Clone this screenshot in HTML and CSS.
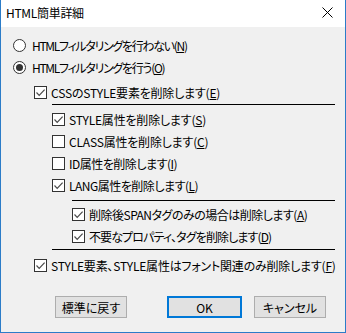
FILE: index.html
```html
<!DOCTYPE html>
<html lang="ja">
<head>
  <meta charset="UTF-8">
  <title>HTML簡単詳細</title>
  <link rel="stylesheet" href="styles.css">
</head>
<body>
  <div class="window">
    <div class="titlebar">
      <span class="title">HTML簡単詳細</span>
      <svg class="close" width="11" height="11" viewBox="0 0 11 11"><path d="M0.5 0.5 L10.5 10.5 M10.5 0.5 L0.5 10.5" stroke="#000" stroke-width="1" fill="none"/></svg>
    </div>

    <div class="content">
      <div class="opt lv0 kana"><span class="radio"></span>HTMLフィルタリングを行わない(<u>N</u>)</div>
      <div class="opt lv0 kana"><span class="radio on"></span>HTMLフィルタリングを行う(<u>O</u>)</div>

      <div class="opt lv1 first"><span class="cb on"><svg width="11" height="11" viewBox="0 0 11 11"><path d="M1.5 5.5 L4.2 8.3 L9.6 2.6" stroke="#4a4a4a" stroke-width="1.2" fill="none"/></svg></span>CSSのSTYLE要素を削除します(<u>E</u>)</div>
      <div class="sep sep-top lv2"></div>
      <div class="opt lv2"><span class="cb on"><svg width="11" height="11" viewBox="0 0 11 11"><path d="M1.5 5.5 L4.2 8.3 L9.6 2.6" stroke="#4a4a4a" stroke-width="1.2" fill="none"/></svg></span>STYLE属性を削除します(<u>S</u>)</div>
      <div class="opt lv2"><span class="cb"></span>CLASS属性を削除します(<u>C</u>)</div>
      <div class="opt lv2 semi"><span class="cb"></span>ID属性を削除します(<u>I</u>)</div>
      <div class="opt lv2 semi"><span class="cb on"><svg width="11" height="11" viewBox="0 0 11 11"><path d="M1.5 5.5 L4.2 8.3 L9.6 2.6" stroke="#4a4a4a" stroke-width="1.2" fill="none"/></svg></span>LANG属性を削除します(<u>L</u>)</div>
      <div class="sep sep-mid lv3"></div>
      <div class="opt lv3 semi"><span class="cb on"><svg width="11" height="11" viewBox="0 0 11 11"><path d="M1.5 5.5 L4.2 8.3 L9.6 2.6" stroke="#4a4a4a" stroke-width="1.2" fill="none"/></svg></span>削除後SPANタグのみの場合は削除します(<u>A</u>)</div>
      <div class="opt lv3 narrow"><span class="cb on"><svg width="11" height="11" viewBox="0 0 11 11"><path d="M1.5 5.5 L4.2 8.3 L9.6 2.6" stroke="#4a4a4a" stroke-width="1.2" fill="none"/></svg></span>不要なプロパティ、タグを削除します(<u>D</u>)</div>
      <div class="sep sep-end lv2"></div>
      <div class="opt lv1"><span class="cb on"><svg width="11" height="11" viewBox="0 0 11 11"><path d="M1.5 5.5 L4.2 8.3 L9.6 2.6" stroke="#4a4a4a" stroke-width="1.2" fill="none"/></svg></span>STYLE要素、STYLE属性はフォント関連のみ削除します(<u>F</u>)</div>

      <div class="buttons">
        <button class="btn">標準に戻す</button>
        <button class="btn default">OK</button>
        <button class="btn cancel">キャンセル</button>
      </div>
    </div>
  </div>
</body>
</html>
```

FILE: styles.css
```css
* { box-sizing: border-box; margin: 0; padding: 0; }
body {
  font-family: "Noto Sans CJK JP", "Noto Sans", sans-serif;
  font-size: 12px;
  color: #000;
  background: #f0f0f0;
}
.window {
  width: 346px;
  height: 333px;
  border: 1px solid #2b7cc8;
  border-top: none;
  background: #f0f0f0;
}
.titlebar {
  height: 27px;
  background: #fff;
  display: flex;
  align-items: center;
  justify-content: space-between;
  padding: 0 12px 2px 5px;
}
.title {
  font-size: 12px;
  letter-spacing: -0.3px;
}
.content {
  padding-top: 7px;
}
.opt {
  display: flex;
  align-items: center;
  height: 22px;
  white-space: nowrap;
  font-feature-settings: "palt";
  letter-spacing: -0.2px;
}
.opt.semi { letter-spacing: -0.5px; }
.opt.narrow { letter-spacing: -0.9px; }
.opt.kana { letter-spacing: -1.3px; }
.opt u { text-underline-offset: 1px; }
.opt.first { margin-top: 3px; }
.lv0 { padding-left: 12px; }
.lv1 { padding-left: 33px; }
.lv2 { padding-left: 51px; }
.lv3 { padding-left: 71px; }
.radio {
  width: 13px;
  height: 13px;
  border: 1px solid #333;
  border-radius: 50%;
  background: #fff;
  margin-right: 6px;
  display: flex;
  align-items: center;
  justify-content: center;
}
.radio.on::after {
  content: "";
  width: 7px;
  height: 7px;
  border-radius: 50%;
  background: #333;
}
.cb {
  width: 13px;
  height: 13px;
  border: 1px solid #333;
  background: #fff;
  margin-right: 4px;
  display: flex;
  align-items: center;
  justify-content: center;
}
.cb svg { display: block; }
.sep {
  height: 1px;
  background: #000;
  padding: 0;
  margin-right: 10px;
}
.sep.lv2 { margin-left: 51px; }
.sep.lv3 { margin-left: 71px; }
.sep-top { margin-top: 1px; margin-bottom: 3px; }
.sep-mid { margin-top: 4px; margin-bottom: 2px; }
.sep-end { margin-top: 2px; margin-bottom: 4px; }
.buttons {
  display: flex;
  padding: 20px 0 0 54px;
}
.btn {
  width: 72px;
  height: 22px;
  font-family: inherit;
  font-size: 12px;
  font-feature-settings: "palt";
  background: #e1e1e1;
  border: 1px solid #adadad;
  color: #000;
}
.btn.default {
  width: 75px;
  margin-left: 40px;
  border: 2px solid #0078d7;
}
.btn.cancel { margin-left: 12px; }
```
